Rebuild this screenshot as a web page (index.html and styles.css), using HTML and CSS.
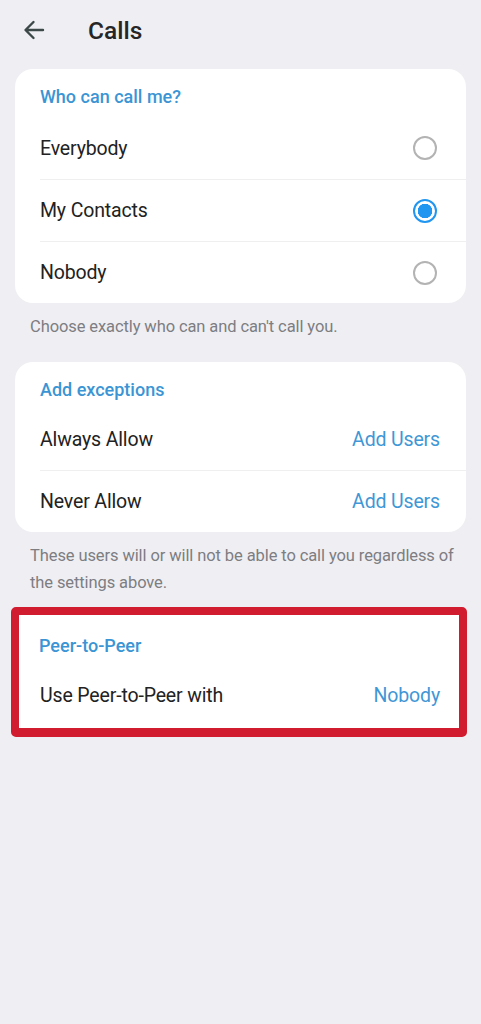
FILE: index.html
```html
<!DOCTYPE html>
<html lang="en">
<head>
    <meta charset="UTF-8">
    <meta name="viewport" content="width=device-width, initial-scale=1.0">
    <title>Calls</title>
    <link rel="stylesheet" href="styles.css">
</head>
<body>
    <div class="topbar">
        <button class="back" type="button">
            <svg width="22" height="20" viewBox="0 0 22 20">
                <path d="M20 10H3M10.5 2L2.5 10l8 8" fill="none" stroke="#3c4848" stroke-width="2.4" stroke-linecap="round" stroke-linejoin="round"/>
            </svg>
        </button>
        <h1>Calls</h1>
    </div>

    <div class="card">
        <div class="card-title">Who can call me?</div>
        <div class="row">
            <span>Everybody</span>
            <span class="radio"></span>
        </div>
        <div class="row">
            <span>My Contacts</span>
            <span class="radio checked"></span>
        </div>
        <div class="row">
            <span>Nobody</span>
            <span class="radio"></span>
        </div>
    </div>
    <p class="note">Choose exactly who can and can't call you.</p>

    <div class="card">
        <div class="card-title short">Add exceptions</div>
        <div class="row">
            <span>Always Allow</span>
            <span class="value">Add Users</span>
        </div>
        <div class="row">
            <span>Never Allow</span>
            <span class="value">Add Users</span>
        </div>
    </div>
    <p class="note">These users will or will not be able to call you regardless of the settings above.</p>

    <div class="highlight">
        <div class="card flat">
            <div class="card-title">Peer-to-Peer</div>
            <div class="row">
                <span>Use Peer-to-Peer with</span>
                <span class="value">Nobody</span>
            </div>
        </div>
    </div>
</body>
</html>
```

FILE: styles.css
```css
body {
    margin: 0;
    background: #efeff3;
    font-family: Roboto, "Noto Sans", sans-serif;
    color: #222;
    height: 1024px;
}
.topbar {
    display: flex;
    align-items: center;
    height: 60px;
}
.back {
    background: none;
    border: none;
    padding: 0;
    margin-left: 23px;
    width: 22px;
    height: 20px;
    display: flex;
}
.topbar h1 {
    margin: 0 0 0 43px;
    font-size: 24.5px;
    font-weight: 500;
    color: #262626;
}
.card {
    background: #fff;
    border-radius: 18px;
    margin: 9px 15px 0;
    overflow: hidden;
}
.card-title {
    padding: 18px 25px 0;
    height: 30px;
    line-height: 20px;
    font-size: 18px;
    font-weight: 500;
    color: #3b95d4;
}
.card-title.short {
    height: 28px;
}
.row {
    display: flex;
    align-items: center;
    justify-content: space-between;
    height: 61px;
    margin-left: 25px;
    padding-right: 26px;
    font-size: 19.5px;
    letter-spacing: -0.15px;
    border-top: 1px solid #efefef;
}
.card-title + .row {
    border-top: none;
    height: 62px;
}
.radio {
    width: 20px;
    height: 20px;
    border: 2px solid #b3b3b3;
    border-radius: 50%;
    margin-right: 3px;
    box-sizing: content-box;
}
.radio.checked {
    border-color: #2196f1;
    background: radial-gradient(circle, #2196f1 0 7px, #fff 7.5px);
}
.value {
    color: #3f97d6;
}
.note {
    margin: 0;
    padding: 10px 20px 0 30px;
    font-size: 16.5px;
    line-height: 27px;
    color: #7d7d82;
    letter-spacing: -0.1px;
}
.note + .card {
    margin-top: 22px;
}
/* red outline drawn round the peer-to-peer block */
.highlight {
    margin: 11px 14px 0 11px;
    border: 8px solid #d11b2e;
    border-bottom-width: 9px;
    border-radius: 5px;
    background: #fff;
}
.card.flat {
    margin: 0;
    border-radius: 0;
}
.card.flat .card-title {
    padding: 21px 20px 0;
    height: 27px;
}
.card.flat .row {
    margin-left: 21px;
    padding-right: 19px;
    height: 65px;
}
```
